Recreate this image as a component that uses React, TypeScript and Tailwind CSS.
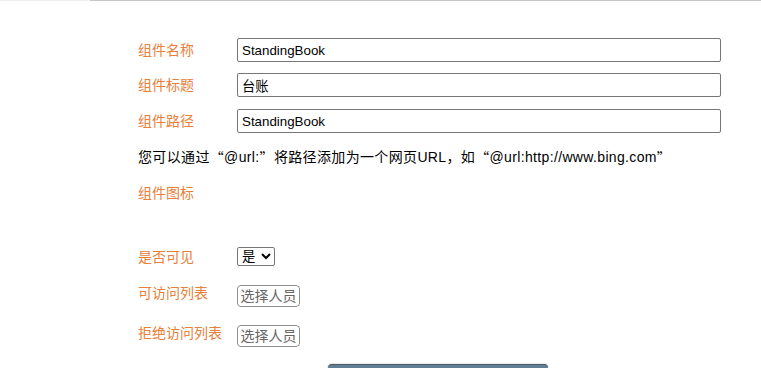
import { useState } from 'react';

const font = { fontFamily: '"Liberation Sans", "Noto Sans CJK SC", sans-serif' };

function Label({ text, className = '' }: { text: string; className?: string }) {
  return (
    <div className={`w-[99px] shrink-0 text-[14px] leading-[20px] text-[#e8803a] ${className}`}>
      {text}
    </div>
  );
}

function PickButton() {
  return (
    <button className="h-[22px] w-[63px] rounded-[4px] border border-[#8f8f8f] bg-white text-[14px] leading-[18px] text-[#666] px-[1px]">
      选择人员
    </button>
  );
}

// full-width quote marks, as the CJK font draws them
function Q({ c }: { c: string }) {
  return <span className="font-['Noto_Sans_CJK_SC']">{c}</span>;
}

function App() {
  const [name, setName] = useState('StandingBook');
  const [title, setTitle] = useState('台账');
  const [path, setPath] = useState('StandingBook');
  const [visible, setVisible] = useState('是');

  const inputCls =
    'h-[24px] w-[484px] rounded-[2px] border border-[#767676] bg-white px-[4px] text-[13.33px] text-black outline-none';

  return (
    <div className="min-h-screen bg-white overflow-hidden" style={font}>
      <div className="flex h-px">
        <div className="w-[90px] bg-[#f0f0f0]" />
        <div className="flex-1 bg-[#c6c6c6]" />
      </div>

      <div className="pl-[138px] pt-[37px] text-black">
        <div className="flex h-[24px] items-center">
          <Label text="组件名称" />
          <input className={inputCls} value={name} onChange={e => setName(e.target.value)} style={font} />
        </div>
        <div className="mt-[11px] flex h-[24px] items-center">
          <Label text="组件标题" />
          <input className={inputCls} value={title} onChange={e => setTitle(e.target.value)} style={font} />
        </div>
        <div className="mt-[12px] flex h-[24px] items-center">
          <Label text="组件路径" />
          <input className={inputCls} value={path} onChange={e => setPath(e.target.value)} style={font} />
        </div>

        <div className="mt-[14px] flex h-[20px] items-center text-[14px] tracking-[0.35px] whitespace-pre">
          您可以通过<Q c="“" />@url:<Q c="”" />将路径添加为一个网页URL，如<Q c="“" />@url:http://www.bing.com<Q c="”" />
        </div>

        <div className="mt-[16px] flex h-[20px] items-center">
          <Label text="组件图标" />
        </div>

        <div className="mt-[44px] flex h-[19px] items-center">
          <Label text="是否可见" />
          <select
            value={visible}
            onChange={e => setVisible(e.target.value)}
            className="h-[19px] w-[38px] rounded-[2px] border border-[#767676] bg-white text-[13.33px] leading-[17px]"
            style={font}
          >
            <option>是</option>
            <option>否</option>
          </select>
        </div>

        <div className="mt-[19px] flex items-start">
          <Label text="可访问列表" className="-mt-[2px]" />
          <PickButton />
        </div>

        <div className="mt-[18px] flex items-start">
          <Label text="拒绝访问列表" className="-mt-[2px]" />
          <PickButton />
        </div>

        <div className="mt-[17px] pl-[190px]">
          <button className="h-[30px] w-[220px] rounded-[4px] border-t border-[#4a5a66] bg-[#607f94] shadow-[0_0_2px_rgba(0,0,0,0.3)]" />
        </div>
      </div>
    </div>
  );
}

export default App;
